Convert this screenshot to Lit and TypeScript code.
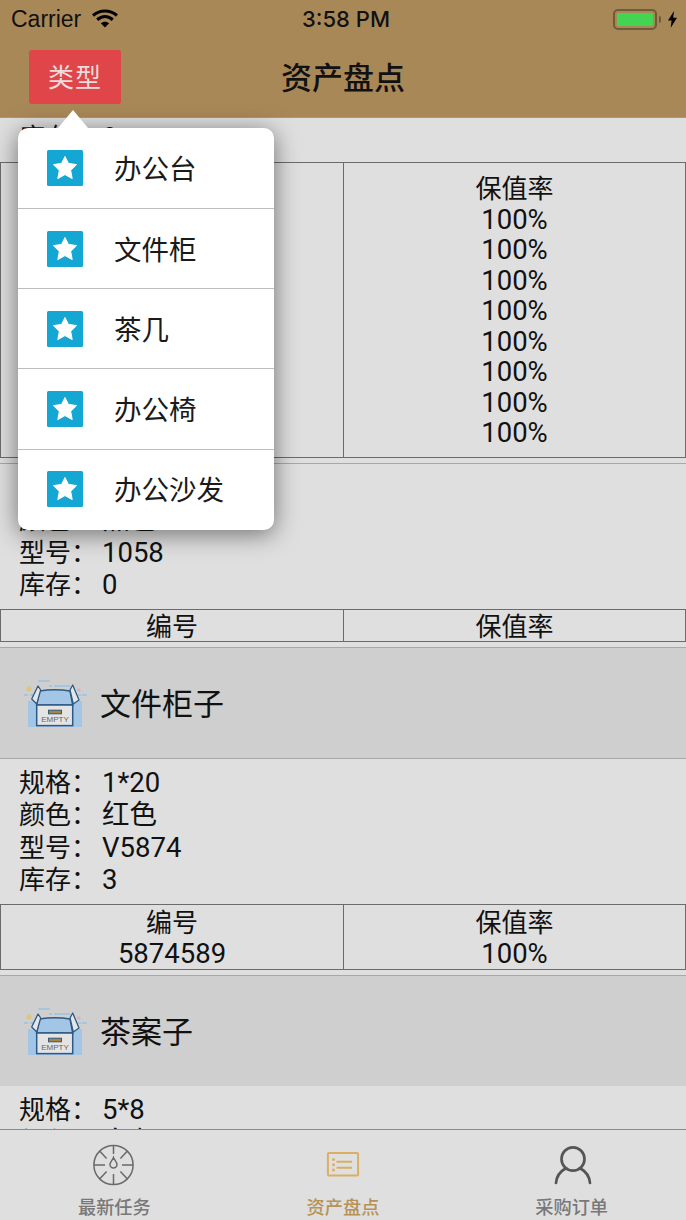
import { LitElement, css, html, svg } from "lit"
import { customElement } from "lit/decorators.js"

interface Group {
  name?: string
  specs: [string, string][]
  ids: string[]
  rates: string[]
  tableHeight: number
}

const groups: Group[] = [
  {
    specs: [["型号", "7"], ["库存", "8"]],
    ids: ["5874581", "5874582", "5874583", "5874584", "5874585", "5874586", "5874587", "5874588"],
    rates: Array(8).fill("100%"),
    tableHeight: 296,
  },
  {
    specs: [["规格", "2*10"], ["颜色", "黑色"], ["型号", "1058"], ["库存", "0"]],
    ids: [],
    rates: [],
    tableHeight: 33,
  },
  {
    name: "文件柜子",
    specs: [["规格", "1*20"], ["颜色", "红色"], ["型号", "V5874"], ["库存", "3"]],
    ids: ["5874589"],
    rates: ["100%"],
    tableHeight: 66,
  },
  {
    name: "茶案子",
    specs: [["规格", "5*8"], ["颜色", "白色"], ["型号", "C2201"], ["库存", "1"]],
    ids: [],
    rates: [],
    tableHeight: 33,
  },
]

const menu = ["办公台", "文件柜", "茶几", "办公椅", "办公沙发"]

const boxIcon = svg`
  <svg class="box" viewBox="0 0 64 54" width="64" height="54">
    <rect x="4" y="25" width="54" height="26" fill="#a3c6e6" />
    <path d="M14 5h12M25 10h3M30 10h16M0 19h4M6 19h3M54 19h3M58 19h5" stroke="#9cc2e4" stroke-width="1.6" fill="none" />
    <path d="M12.7 29 15.500 15C25 13.500 37 13.500 46 15L48.700 29Z" fill="#a3c6e6" stroke="#2c5a85" stroke-width="1.4" />
    <path d="M14 10 7.700 23 12.700 28 16.700 14ZM48.700 9 55 24 49.300 28 46 14Z" fill="#e6e6e6" stroke="#2c5a85" stroke-width="1.3" stroke-linejoin="round" />
    <rect x="12.700" y="29" width="36" height="20.600" fill="#e4e4e4" stroke="#2c5a85" stroke-width="1.5" />
    <rect x="24.500" y="34.200" width="13" height="3.600" fill="#a8843f" stroke="#2c5a85" stroke-width="1" />
    <text x="31" y="46" text-anchor="middle" class="empty">EMPTY</text>
    <path d="M5 10v6M2 13h6M3 11l4 4M7 11l-4 4" stroke="#e3c463" stroke-width="1" />
    <path d="M55 12v4M53 14h4" stroke="#e0a9b8" stroke-width="1" />
  </svg>
`

const star = svg`
  <svg viewBox="0 0 36 36" width="36" height="36">
    <rect width="36" height="36" rx="1.5" fill="#14a7d3" />
    <path d="M18 6.500 21.500 13.400 29.600 14.600 23.700 20.400 25.200 28.600 18 24.600 10.800 28.600 12.300 20.400 6.400 14.600 14.500 13.400Z" fill="#fff" stroke="#fff" stroke-width="1" stroke-linejoin="round" />
  </svg>
`

const dialIcon = svg`
  <svg viewBox="0 0 44 44" width="44" height="44" fill="none" stroke="#6a6a6a" stroke-width="1.5">
    <circle cx="21.500" cy="22" r="19.600" />
    <path d="M21.500 2.400V11M21.500 31V41.600M2 22H13M30 22H41M7.600 8.100 14.600 15.600M35.400 8.100 28.400 15.600M7.600 35.900 14.600 28.400M35.400 35.900 28.400 28.400" />
    <path d="M21.500 14.500C20.600 17 18 19 18 21.600A3.500 3.500 0 0 0 25 21.600C25 19 22.400 17 21.500 14.500Z" />
  </svg>
`

const listIcon = svg`
  <svg viewBox="0 0 44 44" width="44" height="44" fill="none" stroke="#dcae62" stroke-width="2">
    <rect x="6.900" y="9.900" width="30.200" height="22.600" rx="1" />
    <path d="M15.500 18.800H31M15.500 24.800H31" />
    <circle cx="12.500" cy="16.500" r="1.500" fill="#dcae62" stroke="none" />
    <circle cx="12.500" cy="21.800" r="1.500" fill="#dcae62" stroke="none" />
    <circle cx="12.500" cy="27" r="1.500" fill="#dcae62" stroke="none" />
  </svg>
`

const personIcon = svg`
  <svg viewBox="0 0 44 44" width="44" height="44" fill="none" stroke="#555" stroke-width="2.7" stroke-linecap="round">
    <ellipse cx="23" cy="16" rx="11.500" ry="11.600" />
    <path d="M6 40C6.500 33.500 10 28.500 15.500 25.500M40 40C39.500 33.500 36 28.500 30.500 25.500" />
  </svg>
`

@customElement("app-root")
export class AppRoot extends LitElement {
  renderCell(title: string, values: string[]) {
    return html`
      <div class="cell">
        <span>${title}</span>
        ${values.map((v) => html`<span class="num">${v}</span>`)}
      </div>
    `
  }

  renderGroup(g: Group) {
    return html`
      <section class="group">
        ${g.name
          ? html`<div class="head">${boxIcon}<span class="head-name">${g.name}</span></div>`
          : ""}
        <div class="specs">
          ${g.specs.map(
            ([k, v]) => html`<div class="spec"><span class="key">${k}：</span><span class="num">${v}</span></div>`
          )}
        </div>
        <div class="table" style="height: ${g.tableHeight}px">
          ${this.renderCell("编号", g.ids)} ${this.renderCell("保值率", g.rates)}
        </div>
      </section>
    `
  }

  render() {
    return html`
      <header class="top">
        <div class="status">
          <div class="carrier">
            <span>Carrier</span>
            <svg viewBox="0 0 26 19" width="26" height="19" fill="none" stroke="#000" stroke-width="3.2">
              <path d="M1 6.500C8 .5 18 .5 25 6.500" />
              <path d="M5.200 10.700C10 6.500 16 6.500 20.800 10.700" />
              <path d="M13 18.500 8.800 14.300C11 12.200 15 12.200 17.200 14.300Z" fill="#000" stroke="none" />
            </svg>
          </div>
          <div class="time">3:58 PM</div>
          <div class="power">
            <div class="battery"><div class="level"></div></div>
            <div class="tip"></div>
            <svg viewBox="0 0 9 17" width="9" height="17"><path d="M6 0 0 9.500H3.600L2.600 17 9 6.800H5.200Z" fill="#000" /></svg>
          </div>
        </div>
        <div class="nav">
          <button class="type">类型</button>
          <div class="title">资产盘点</div>
          <div></div>
        </div>
      </header>

      <main class="list">${groups.map((g) => this.renderGroup(g))}</main>

      <nav class="tabs">
        <div class="tab">${dialIcon}<span>最新任务</span></div>
        <div class="tab active">${listIcon}<span>资产盘点</span></div>
        <div class="tab">${personIcon}<span>采购订单</span></div>
      </nav>

      <div class="popover">
        ${menu.map((m) => html`<div class="item">${star}<span>${m}</span></div>`)}
      </div>
    `
  }

  static styles = css`
    :host {
      position: relative;
      display: flex;
      flex-direction: column;
      width: 686px;
      height: 1220px;
      overflow: hidden;
      background: #dfdfdf;
      color: #111;
      font-family: "Liberation Sans", "Noto Sans CJK SC", sans-serif;
      font-size: 26px;
    }
    .top {
      flex: none;
      height: 118px;
      box-sizing: border-box;
      background: #a98858;
      border-bottom: 1px solid #9a9a9a;
      position: relative;
      z-index: 1;
    }
    .status {
      display: grid;
      grid-template-columns: 1fr auto 1fr;
      align-items: center;
      height: 38px;
      padding: 0 9px 0 11px;
      color: #111;
      font-size: 23px;
    }
    .carrier {
      display: flex;
      align-items: center;
      gap: 11px;
    }
    .carrier svg {
      margin-top: -2px;
    }
    .time {
      font-family: "Inter", sans-serif;
      font-weight: 500;
      font-size: 22px;
      margin-left: 4px;
    }
    .power {
      display: flex;
      align-items: center;
      justify-content: flex-end;
    }
    .battery {
      box-sizing: border-box;
      width: 44px;
      height: 21px;
      padding: 2px;
      border: 2px solid #6f5a3c;
      border-radius: 5px;
    }
    .level {
      height: 100%;
      background: #43d552;
    }
    .tip {
      width: 2px;
      height: 7px;
      margin: 0 7px 0 2px;
      background: #6f5a3c;
      border-radius: 0 2px 2px 0;
    }
    .nav {
      display: grid;
      grid-template-columns: 1fr auto 1fr;
      align-items: center;
      padding: 12px 0 0 29px;
    }
    .type {
      width: 92px;
      height: 54px;
      padding: 0 0 3px;
      border: none;
      border-radius: 3px;
      background: #e0454a;
      color: #ecdcdc;
      font: inherit;
      letter-spacing: 1px;
    }
    .title {
      margin: 0 0 4px -29px;
      font-size: 31px;
      font-weight: 500;
      color: #111;
      font-family: "Noto Sans CJK SC", sans-serif;
    }
    .list {
      flex: 1;
      min-height: 0;
      overflow: hidden;
    }
    .group {
      padding-bottom: 3.5px;
    }
    .group:first-child {
      margin-top: -36.25px;
    }
    .group + .group {
      border-top: 1px solid #a8a8a8;
    }
    .head {
      display: flex;
      align-items: center;
      gap: 12px;
      height: 111px;
      box-sizing: border-box;
      padding: 0 0 0 24px;
      background: #cfcfcf;
      border-bottom: 1px solid #a8a8a8;
    }
    .group:last-child .head {
      height: 110px;
      border-bottom: none;
    }
    .head-name {
      font-size: 31px;
      padding-bottom: 3px;
    }
    .empty {
      font: 8px "Liberation Sans", sans-serif;
      fill: #666;
    }
    .specs {
      padding: 8px 18px 7px 19px;
    }
    .spec {
      display: flex;
      height: 32.625px;
      line-height: 32.625px;
    }
    .key {
      width: 83px;
    }
    .num {
      font-family: "Roboto", "Noto Sans CJK SC", sans-serif;
      font-size: 27.5px;
    }
    .table {
      display: grid;
      grid-template-columns: 1fr 1fr;
      grid-template-rows: minmax(0, 1fr);
      box-sizing: border-box;
      border: 1px solid #6b6b6b;
      margin-bottom: 1px;
    }
    .cell {
      display: flex;
      flex-direction: column;
      justify-content: center;
      align-items: center;
      box-sizing: border-box;
      min-height: 0;
      padding-top: 3px;
      line-height: 30.5px;
    }
    .cell + .cell {
      border-left: 1px solid #6b6b6b;
    }
    .tabs {
      flex: none;
      height: 91px;
      box-sizing: border-box;
      display: grid;
      grid-template-columns: repeat(3, 1fr);
      background: #dfdfdf;
      border-top: 1px solid #8c8c8c;
    }
    .tab {
      display: flex;
      flex-direction: column;
      align-items: center;
      padding-top: 13px;
      color: #787878;
      font-size: 18.2px;
      font-weight: 500;
      font-family: "Noto Sans CJK SC", sans-serif;
      line-height: 24px;
    }
    .tab span {
      margin-top: 7px;
    }
    .tab.active {
      color: #b79257;
    }
    .popover {
      position: absolute;
      z-index: 2;
      left: 18px;
      top: 128px;
      width: 256px;
      height: 402px;
      border-radius: 10px;
      background: #fff;
      box-shadow: 0 4px 24px rgba(0, 0, 0, 0.5);
    }
    .popover::before {
      content: "";
      position: absolute;
      left: 40px;
      top: -18px;
      border: solid transparent;
      border-width: 0 15px 18px;
      border-bottom-color: #fff;
    }
    .item {
      display: flex;
      align-items: center;
      gap: 31px;
      height: 80.15px;
      box-sizing: border-box;
      padding-left: 29px;
      font-size: 27.5px;
      color: #1a1a1a;
    }
    .item span {
      padding-bottom: 2px;
    }
    .item + .item {
      border-top: 1px solid #bdbdbd;
    }
  `
}

declare global {
  interface HTMLElementTagNameMap {
    "app-root": AppRoot
  }
}
